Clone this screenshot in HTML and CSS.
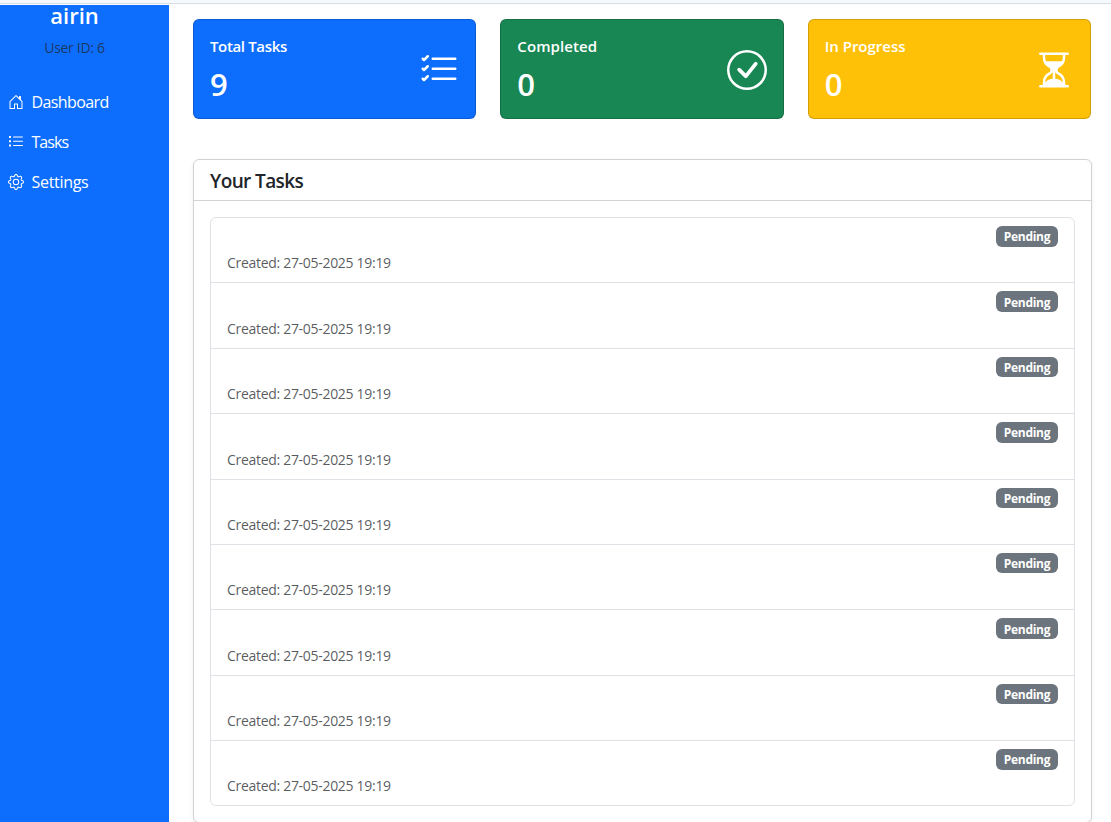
FILE: index.html
```
<!DOCTYPE html>
<html lang="en">
<head>
<meta charset="utf-8">
<title>Dashboard</title>
<link rel="stylesheet" href="styles.css">
</head>
<body>
<header class="topbar"></header>
<div class="shell">
  <aside class="sidebar">
    <div class="user"><h4 class="user-name"><span>airin</span></h4><small class="user-id">User ID: 6</small></div>
    <nav class="nav">
      <a class="nav-link"><svg class="nav-icon" viewBox="0 0 16 16"><path d="M8.354 1.146a.5.5 0 0 0-.708 0l-6 6A.5.5 0 0 0 1.5 7.5v7a.5.5 0 0 0 .5.5h4.5a.5.5 0 0 0 .5-.5v-4h2v4a.5.5 0 0 0 .5.5H14a.5.5 0 0 0 .5-.5v-7a.5.5 0 0 0-.146-.354L13 5.793V2.5a.5.5 0 0 0-.5-.5h-1a.5.5 0 0 0-.5.5v1.293zM2.5 14V7.707l5.5-5.5 5.5 5.5V14H10v-4a.5.5 0 0 0-.5-.5h-3a.5.5 0 0 0-.5.5v4z"/></svg><span class="t-dashboard">Dashboard</span></a>
      <a class="nav-link"><svg class="nav-icon" viewBox="0 0 16 16"><path d="M1 2h2v2H1zM1 6.300h2v2H1zM1 10.600h2v2H1zM5.500 2.500h9a.5.5 0 0 1 0 1h-9a.5.5 0 0 1 0-1zM5.500 6.800h9a.5.5 0 0 1 0 1h-9a.5.5 0 0 1 0-1zM5.500 11.100h9a.5.5 0 0 1 0 1h-9a.5.5 0 0 1 0-1z"/></svg><span class="t-tasks">Tasks</span></a>
      <a class="nav-link"><svg class="nav-icon" viewBox="0 0 16 16"><path d="M8 4.754a3.246 3.246 0 1 0 0 6.492 3.246 3.246 0 0 0 0-6.492zM5.754 8a2.246 2.246 0 1 1 4.492 0 2.246 2.246 0 0 1-4.492 0z"/><path d="M9.796 1.343c-.527-1.79-3.065-1.79-3.592 0l-.094.319a.873.873 0 0 1-1.255.52l-.292-.16c-1.64-.892-3.433.902-2.54 2.541l.159.292a.873.873 0 0 1-.52 1.255l-.319.094c-1.79.527-1.79 3.065 0 3.592l.319.094a.873.873 0 0 1 .52 1.255l-.16.292c-.892 1.64.901 3.434 2.541 2.54l.292-.159a.873.873 0 0 1 1.255.52l.094.319c.527 1.79 3.065 1.79 3.592 0l.094-.319a.873.873 0 0 1 1.255-.52l.292.16c1.64.893 3.434-.902 2.54-2.541l-.159-.292a.873.873 0 0 1 .52-1.255l.319-.094c1.79-.527 1.79-3.065 0-3.592l-.319-.094a.873.873 0 0 1-.52-1.255l.16-.292c.893-1.64-.902-3.433-2.541-2.54l-.292.159a.873.873 0 0 1-1.255-.52l-.094-.319zm-2.633.283c.246-.835 1.428-.835 1.674 0l.094.319a1.873 1.873 0 0 0 2.693 1.115l.291-.16c.764-.415 1.6.42 1.184 1.185l-.159.292a1.873 1.873 0 0 0 1.116 2.692l.318.094c.835.246.835 1.428 0 1.674l-.319.094a1.873 1.873 0 0 0-1.115 2.693l.16.291c.415.764-.42 1.6-1.185 1.184l-.291-.159a1.873 1.873 0 0 0-2.693 1.116l-.094.318c-.246.835-1.428.835-1.674 0l-.094-.319a1.873 1.873 0 0 0-2.692-1.115l-.292.16c-.764.415-1.6-.42-1.184-1.185l.159-.291A1.873 1.873 0 0 0 1.945 8.93l-.319-.094c-.835-.246-.835-1.428 0-1.674l.319-.094A1.873 1.873 0 0 0 3.06 4.377l-.16-.292c-.415-.764.42-1.6 1.185-1.184l.292.159a1.873 1.873 0 0 0 2.692-1.115z"/></svg><span class="t-settings">Settings</span></a>
    </nav>
  </aside>
  <main class="main">
    <section class="stats">
      <div class="stat stat-total"><div><h6 class="stat-title t-total">Total Tasks</h6><div class="stat-value">9</div></div><svg class="stat-icon" viewBox="0 0 16 16"><path d="M5.500 11h9a.5.5 0 0 1 0 1h-9a.5.5 0 0 1 0-1zM5.500 7h9a.5.5 0 0 1 0 1h-9a.5.5 0 0 1 0-1zM5.500 3h9a.5.5 0 0 1 0 1h-9a.5.5 0 0 1 0-1z"/><path d="M3.854 2.146a.5.5 0 0 1 0 .708l-1.5 1.5a.5.5 0 0 1-.708 0l-.5-.5a.5.5 0 1 1 .708-.708L2 3.293l1.146-1.147a.5.5 0 0 1 .708 0m0 4a.5.5 0 0 1 0 .708l-1.5 1.5a.5.5 0 0 1-.708 0l-.5-.5a.5.5 0 1 1 .708-.708L2 7.293l1.146-1.147a.5.5 0 0 1 .708 0m0 4a.5.5 0 0 1 0 .708l-1.5 1.5a.5.5 0 0 1-.708 0l-.5-.5a.5.5 0 0 1 .708-.708l.146.147 1.146-1.147a.5.5 0 0 1 .708 0"/></svg></div>
      <div class="stat stat-done"><div><h6 class="stat-title t-completed">Completed</h6><div class="stat-value">0</div></div><svg class="stat-icon" viewBox="0 0 16 16"><path d="M8 15A7 7 0 1 1 8 1a7 7 0 0 1 0 14m0 1A8 8 0 1 0 8 0a8 8 0 0 0 0 16"/><path d="m10.970 4.970-.02.022-3.473 4.425-2.093-2.094a.75.75 0 0 0-1.06 1.060L6.970 11.030a.75.75 0 0 0 1.079-.02l3.992-4.990a.75.75 0 0 0-1.071-1.050"/></svg></div>
      <div class="stat stat-progress"><div><h6 class="stat-title t-progress">In Progress</h6><div class="stat-value">0</div></div><svg class="stat-icon" viewBox="0 0 16 16"><path d="M2.500 15a.5.5 0 1 1 0-1h1v-1a4.500 4.500 0 0 1 2.557-4.060c.29-.139.443-.377.443-.59v-.7c0-.213-.154-.451-.443-.59A4.500 4.500 0 0 1 3.500 3V2h-1a.5.5 0 0 1 0-1h11a.5.5 0 0 1 0 1h-1v1a4.500 4.500 0 0 1-2.557 4.060c-.29.139-.443.377-.443.59v.7c0 .213.154.451.443.59A4.500 4.500 0 0 1 12.500 13v1h1a.5.5 0 0 1 0 1zm2-13v1c0 .537.12 1.045.337 1.500h6.326c.216-.455.337-.963.337-1.500V2zm3 6.350c0 .701-.478 1.236-1.011 1.492A3.500 3.500 0 0 0 4.500 13s.866-1.299 3-1.480zm1 0v3.170c2.134.181 3 1.480 3 1.480a3.500 3.500 0 0 0-1.989-3.158C8.978 9.586 8.500 9.052 8.500 8.351z"/></svg></div>
    </section>
    <section class="card">
      <div class="card-header"><h5 class="card-title"><span>Your Tasks</span></h5></div>
      <div class="card-body">
        <ul class="list">
          <li class="item"><small class="created">Created: 27-05-2025 19:19</small><span class="badge"><span>Pending</span></span></li>
          <li class="item"><small class="created">Created: 27-05-2025 19:19</small><span class="badge"><span>Pending</span></span></li>
          <li class="item"><small class="created">Created: 27-05-2025 19:19</small><span class="badge"><span>Pending</span></span></li>
          <li class="item"><small class="created">Created: 27-05-2025 19:19</small><span class="badge"><span>Pending</span></span></li>
          <li class="item"><small class="created">Created: 27-05-2025 19:19</small><span class="badge"><span>Pending</span></span></li>
          <li class="item"><small class="created">Created: 27-05-2025 19:19</small><span class="badge"><span>Pending</span></span></li>
          <li class="item"><small class="created">Created: 27-05-2025 19:19</small><span class="badge"><span>Pending</span></span></li>
          <li class="item"><small class="created">Created: 27-05-2025 19:19</small><span class="badge"><span>Pending</span></span></li>
          <li class="item"><small class="created">Created: 27-05-2025 19:19</small><span class="badge"><span>Pending</span></span></li>
        </ul>
      </div>
    </section>
  </main>
</div>
</body>
</html>
```
FILE: styles.css
```
* { box-sizing: border-box; }
body {
  margin: 0;
  height: 822px;
  overflow: hidden;
  background: #fff;
  color: #212529;
  font: 16px/24px "Open Sans", "Noto Sans", sans-serif;
}
h4, h5, h6, ul { margin: 0; padding: 0; }
svg { display: block; fill: currentColor; flex: none; }
.topbar { height: 5px; background: #f5f8fd; border-bottom: 1px solid #fbfcfe; box-shadow: inset 0 -1px #d8dfe8; }
.shell { display: flex; height: 817px; }
.sidebar { width: 169px; flex: none; background: #0d6efd; color: #fff; overflow: hidden; }
.user { width: 149px; display: flex; flex-direction: column; align-items: center; }
.user-name { font-size: 22px; line-height: 20px; font-weight: 600; }
.user-id { margin-top: 12px; font-size: 14px; line-height: 21px; color: rgba(33, 37, 41, .75); letter-spacing: -0.3px; white-space: nowrap; }
.nav { margin-top: 24px; padding-left: 7.500px; }
.nav-link { display: flex; align-items: center; gap: 8px; height: 40px; }
.nav-icon { width: 16px; height: 16px; }
.t-dashboard { letter-spacing: -0.6px; }
.t-tasks { letter-spacing: -0.95px; }
.t-settings { letter-spacing: -0.3px; }
.main { flex: 1; min-width: 0; padding: 14px 19px 0 24px; }
.stats { display: grid; grid-template-columns: repeat(3, 1fr); gap: 24px; padding-right: 1px; }
.stat {
  display: flex;
  justify-content: space-between;
  align-items: center;
  height: 100px;
  padding: 0 16px;
  border: 1px solid rgba(0, 0, 0, .175);
  border-radius: 6px;
  color: #fff;
}
.stat-total { background: #0d6efd; }
.stat-done { background: #198754; }
.stat-progress { background: #ffc107; }
.stat-title { font-size: 15px; line-height: 20px; font-weight: 600; }
.t-total { letter-spacing: -0.35px; }
.t-completed { letter-spacing: 0.1px; }
.stat-value { margin-top: 9px; font-size: 31px; line-height: 38px; font-weight: 600; }
.stat-icon { width: 40px; height: 40px; margin-top: 2px; }
.card {
  margin-top: 40px;
  border: 1px solid rgba(0, 0, 0, .175);
  border-radius: 6px;
  box-shadow: 0 2px 4px rgba(0, 0, 0, .075);
}
.card-header { padding: 9px 16px 7px; border-bottom: 1px solid rgba(0, 0, 0, .175); }
.card-title { font-size: 19px; line-height: 24px; font-weight: 600; letter-spacing: -0.6px; }
.card-body { padding: 16px; }
.list { list-style: none; border: 1px solid #dee2e6; border-radius: 6px; }
.item {
  display: flex;
  justify-content: space-between;
  height: 65.4px;
  padding: 8px 16px 9px;
  border-bottom: 1px solid #dee2e6;
}
.item:last-child { height: 64.200px; border-bottom: 0; }
.created { align-self: flex-end; font-size: 14px; line-height: 21px; color: rgba(33, 37, 41, .75); letter-spacing: -0.3px; }
.badge {
  display: flex;
  align-items: center;
  justify-content: center;
  width: 62px;
  height: 20.5px;
  padding-top: 2px;
  border-radius: 6px;
  background: #6c757d;
  color: #fff;
  font-size: 12px;
  line-height: 12px;
  font-weight: 700;
  letter-spacing: -0.3px;
}
```
